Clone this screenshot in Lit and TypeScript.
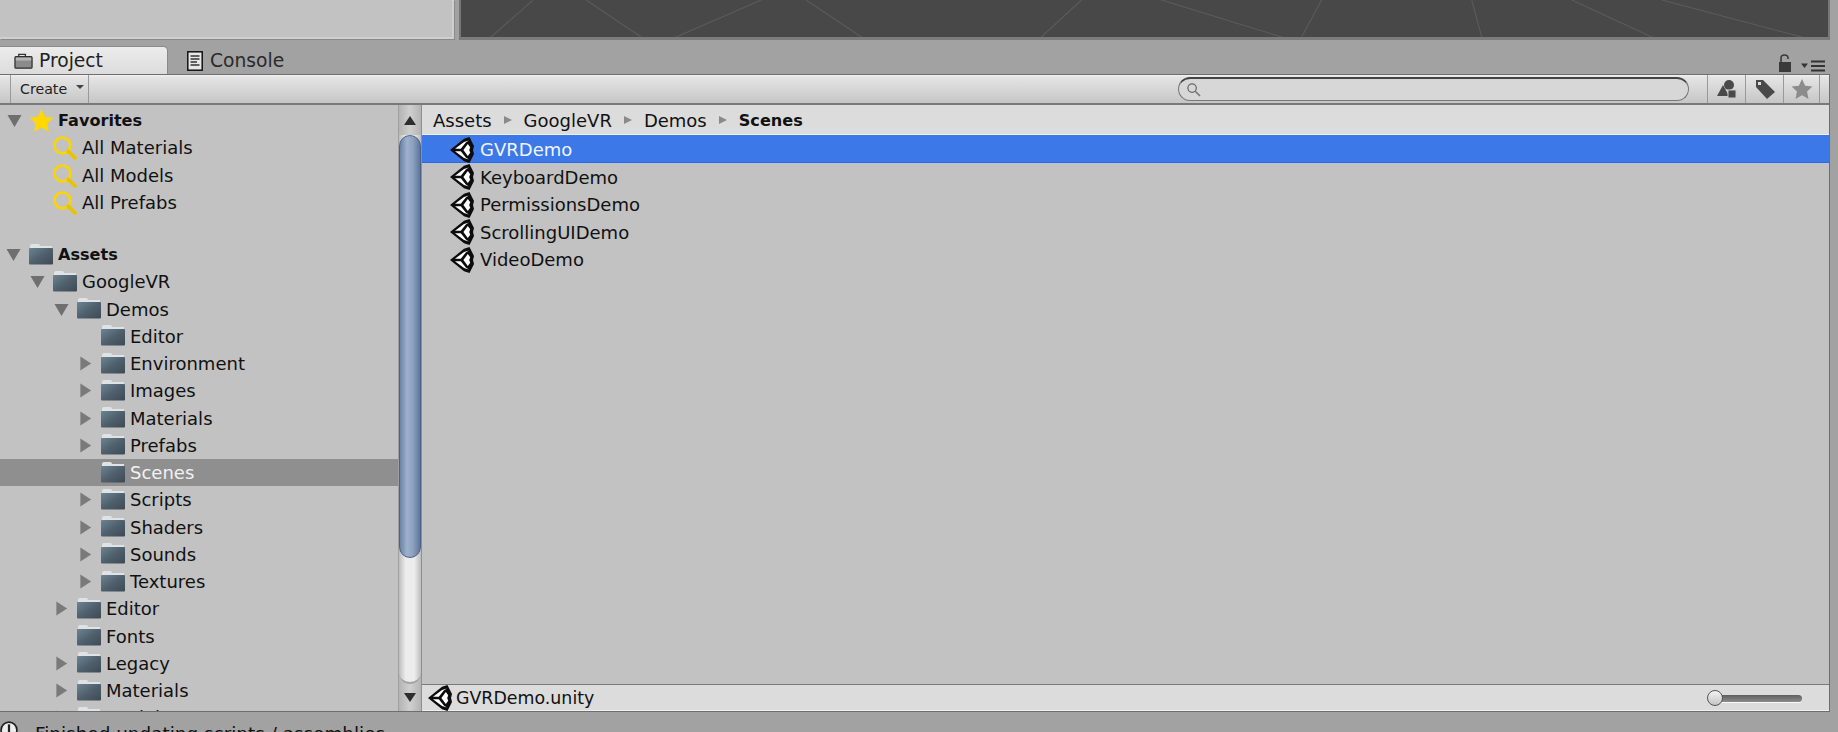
import { LitElement, html, css, svg } from "lit";
import { customElement } from "lit/decorators.js";

type Node = { name: string; depth: number; arrow?: "open" | "closed"; bold?: boolean; sel?: boolean; gap?: boolean };

const favorites = ["All Materials", "All Models", "All Prefabs"];
const tree: Node[] = [
  { name: "Assets", depth: 0, arrow: "open", bold: true, gap: true },
  { name: "GoogleVR", depth: 1, arrow: "open" },
  { name: "Demos", depth: 2, arrow: "open" },
  { name: "Editor", depth: 3 },
  { name: "Environment", depth: 3, arrow: "closed" },
  { name: "Images", depth: 3, arrow: "closed" },
  { name: "Materials", depth: 3, arrow: "closed" },
  { name: "Prefabs", depth: 3, arrow: "closed" },
  { name: "Scenes", depth: 3, sel: true },
  { name: "Scripts", depth: 3, arrow: "closed" },
  { name: "Shaders", depth: 3, arrow: "closed" },
  { name: "Sounds", depth: 3, arrow: "closed" },
  { name: "Textures", depth: 3, arrow: "closed" },
  { name: "Editor", depth: 2, arrow: "closed" },
  { name: "Fonts", depth: 2 },
  { name: "Legacy", depth: 2, arrow: "closed" },
  { name: "Materials", depth: 2, arrow: "closed" },
  { name: "Models", depth: 2, arrow: "closed" },
];
const scenes = ["GVRDemo", "KeyboardDemo", "PermissionsDemo", "ScrollingUIDemo", "VideoDemo"];

const unity = (cls = "unity") => html`<svg class=${cls} viewBox="0 0 24 26">
  <path d="M0 13 L14 1.8 L19.5 0 L24 9 L23 13 L24 17 L19.5 26 L14 24.2 Z" fill="#0c0c0c"/>
  <path d="M5 11.8 L10.8 11.8 L15.8 5.4 L18.8 3.6 L14 5 Z" fill="#fff"/>
  <path d="M5 14.2 L10.8 14.2 L15.8 20.6 L18.8 22.4 L14 21 Z" fill="#fff"/>
  <path d="M17.8 7 L20.2 10.2 L19.2 13 L20.2 15.8 L17.8 19 L13.4 13 Z" fill="#fff"/>
</svg>`;

const folder = html`<svg class="folder" viewBox="0 0 26 22">
  <defs><linearGradient id="fg" x1="0" y1="0" x2="1" y2="1">
    <stop offset="0" stop-color="#6d8494"/><stop offset="0.5" stop-color="#4f606c"/><stop offset="1" stop-color="#3d4a54"/>
  </linearGradient></defs>
  <path d="M2 6 L2 3 Q2 1 4 1 L10 1 Q12 1 12 3 L24 3 L24 6 Z" fill="#dfe3e6"/>
  <rect x="1" y="5" width="24" height="16.5" rx="1" fill="url(#fg)"/>
</svg>`;

const star = (fill: string, cls: string) => html`<svg class=${cls} viewBox="0 0 24 24">
  <path d="M12 1 L15.4 8.4 L23.4 9.3 L17.5 14.8 L19.1 22.8 L12 18.8 L4.9 22.8 L6.5 14.8 L0.6 9.3 L8.6 8.4 Z" fill=${fill}/>
</svg>`;

const lens = html`<svg class="lens" viewBox="0 0 24 24">
  <circle cx="10" cy="10" r="7.6" fill="none" stroke="#fbd500" stroke-width="2.6"/>
  <path d="M15.6 15.6 L22 22" stroke="#e8c400" stroke-width="3.6" stroke-linecap="round"/>
</svg>`;

const tri = (open: boolean) =>
  open
    ? html`<svg class="arrow" viewBox="0 0 16 16"><path d="M0.5 2 L15.5 2 L8 15 Z" fill="#6f6f6f"/></svg>`
    : html`<svg class="arrow" viewBox="0 0 16 16"><path d="M2.5 0.5 L14 8 L2.5 15.5 Z" fill="#7a7a7a"/></svg>`;

@customElement("app-root")
export class AppRoot extends LitElement {
  static styles = css`
    :host {
      display: flex;
      flex-direction: column;
      width: 1838px;
      height: 732px;
      overflow: hidden;
      background: #a2a2a2;
      font-family: "DejaVu Sans", sans-serif;
      font-size: 18px;
      color: #111;
    }
    .top { display: flex; height: 40px; flex: none; }
    .top-left {
      width: 454px; height: 39px; box-sizing: border-box; background: #c2c2c2;
      border: 2px solid #cfcfcf; border-left: none; border-top: none;
      box-shadow: 1px 1px 0 #8a8a8a;
    }
    .scene {
      margin-left: 5px; width: 1371px; height: 40px; box-sizing: border-box; background: #484848;
      border-left: 2px solid #777; border-bottom: 3px solid #7c7c7c; border-right: 2px solid #777;
    }
    .scene svg { display: block; width: 100%; height: 100%; }
    .tabs { display: flex; height: 34px; flex: none; position: relative; align-items: flex-end; }
    .tab { height: 27px; display: flex; align-items: center; font-size: 18.7px; color: #222; box-sizing: border-box; }
    .tab.active {
      width: 167px; padding-left: 14px; gap: 6px; background: linear-gradient(#ececec, #dcdcdc);
      border-radius: 0 4px 0 0; box-shadow: 0 -1px 0 #8a8a8a, 1px 0 0 #8a8a8a;
    }
    .tab.other { padding-left: 20px; gap: 7px; color: #2a2a2a; }
    .tab-icons { margin-left: auto; margin-right: 13px; display: flex; align-items: flex-end; gap: 9px; height: 27px; padding-bottom: 2px; box-sizing: border-box; }
    .panel {
      width: 1830px; flex: none; height: 638px; display: flex; flex-direction: column; box-sizing: border-box;
      border-top: 1px solid #6e6e6e; border-right: 1px solid #6e6e6e; border-bottom: 1px solid #6e6e6e;
    }
    .toolbar {
      height: 30px; flex: none; display: flex; align-items: stretch; box-sizing: border-box;
      background: linear-gradient(#f2f2f2 0, #e4e4e4 8%, #c6c6c6 100%);
      border-bottom: 2px solid #797979;
    }
    .create {
      margin-left: 10px; width: 79px; display: flex; align-items: center; padding-left: 9px; gap: 9px; box-sizing: border-box;
      border-left: 1px solid #9a9a9a; border-right: 1px solid #9a9a9a; font-size: 14.2px; color: #222;
    }
    .caret { width: 0; height: 0; border-left: 4px solid transparent; border-right: 4px solid transparent; border-top: 4px solid #444; margin-top: -4px; }
    .search {
      margin-left: auto; width: 511px; height: 24px; margin-top: 2px; box-sizing: border-box; border-radius: 12px;
      background: #d7d7d7; border: 1px solid #777; border-top: 2px solid #444; display: flex; align-items: center; padding-left: 7px;
    }
    .search svg { width: 15px; height: 15px; }
    .tool-btns { display: flex; margin-left: 18px; margin-right: 9px; }
    .tool-btn { width: 38px; border-left: 1px solid #999; display: flex; align-items: center; justify-content: center; box-sizing: border-box; }
    .tool-btn:last-child { width: 37px; border-right: 1px solid #999; }
    .tool-btn svg { width: 22px; height: 22px; }
    .split { flex: 1; display: flex; min-height: 0; }
    .tree { width: 398px; flex: none; background: #c2c2c2; overflow: hidden; padding-top: 2px; box-sizing: border-box; }
    .row { height: 27.25px; display: flex; align-items: center; box-sizing: border-box; white-space: nowrap; }
    .row.sel { background: #8f8f8f; color: #f2f2f2; }
    .row.gap { margin-top: 25px; }
    .b { font-weight: 700; font-size: 16.1px; }
    .arrow { width: 15px; height: 15px; flex: none; }
    .slot { width: 22px; flex: none; display: flex; align-items: center; }
    .folder { width: 26px; height: 22px; flex: none; margin-right: 4px; margin-top: -2px; }
    .star { width: 25px; height: 25px; flex: none; margin-right: 4px; }
    .lens { width: 25px; height: 25px; flex: none; margin-right: 5px; }
    .scroll {
      width: 24px; flex: none; display: flex; flex-direction: column; align-items: center; box-sizing: border-box;
      background: linear-gradient(90deg, #b4b4b4, #cfcfcf 50%, #b4b4b4); border-left: 1px solid #a0a0a0; border-right: 1px solid #8f8f8f;
    }
    .sb-btn { height: 27px; flex: none; width: 100%; display: flex; align-items: center; justify-content: center; }
    .sb-btn.first { height: 30px; }
    .up { width: 0; height: 0; border-left: 6px solid transparent; border-right: 6px solid transparent; border-bottom: 9px solid #2e2e2e; }
    .down { width: 0; height: 0; border-left: 6px solid transparent; border-right: 6px solid transparent; border-top: 9px solid #2e2e2e; }
    .track { flex: 1; width: 22px; display: flex; flex-direction: column; background: linear-gradient(90deg, #bdbdbd, #ececec 30%, #ececec 70%, #bdbdbd); border-radius: 0 0 11px 11px; border-bottom: 2px solid #a4a4a4; box-sizing: border-box; }
    .thumb {
      height: 423px; flex: none; width: 100%; box-sizing: border-box; border-radius: 11px;
      background: linear-gradient(90deg, #6a82a6, #9db1cc 35%, #8ca1bf 65%, #5f7699);
      border: 1.5px solid #4c6388;
    }
    .content { flex: 1; min-width: 0; display: flex; flex-direction: column; background: #c2c2c2; }
    .crumbs {
      height: 30px; flex: none; background: #dcdcdc; display: flex; align-items: center; padding-left: 11px; padding-top: 1px; box-sizing: border-box;
      border-bottom: 1px solid #f0f0f0;
    }
    .crumb-sep { width: 0; height: 0; border-left: 8px solid #8a8a8a; border-top: 4px solid transparent; border-bottom: 4px solid transparent; margin: 0 12px; }
    .list { flex: 1; }
    .item { height: 27.45px; display: flex; align-items: center; padding-left: 28px; padding-top: 2px; gap: 6px; box-sizing: border-box; }
    .item.sel { height: 28px; background: #3c78e8; color: #f0f6ff; border-bottom: 1px solid #1f6cf0; margin-bottom: -0.4px; }
    .unity { width: 24px; height: 26px; flex: none; }
    .footer {
      height: 27px; flex: none; background: #dcdcdc; border-top: 1px solid #7a7a7a; display: flex; align-items: center; padding-left: 6px; gap: 4px;
      box-sizing: border-box; box-shadow: inset 0 -1px 0 #f0f0f0; font-size: 17.4px;
    }
    .slider { margin-left: auto; margin-right: 27px; display: flex; align-items: center; width: 95px; position: relative; height: 100%; }
    .rail { position: absolute; left: 8px; right: 0; height: 7px; border-radius: 4px; background: linear-gradient(#5f5f5f, #8c8c8c); box-shadow: 0 1px 0 #fafafa; }
    .knob { position: absolute; left: 0; width: 16px; height: 16px; box-sizing: border-box; border-radius: 50%; background: linear-gradient(#f4f4f4, #c4c4c4); border: 1.5px solid #555; }
    .status { display: flex; align-items: flex-start; gap: 17px; padding-top: 11px; font-size: 18.4px; white-space: nowrap; color: #111; flex: none; }
    .alert { width: 18px; height: 18px; flex: none; margin-top: -2px; }
  `;

  render() {
    return html`
      <div class="top">
        <div class="top-left"></div>
        <div class="scene">
          <svg viewBox="0 0 1366 36" preserveAspectRatio="none">
            ${[[30, 36, 72, 0], [180, 36, 125, 0], [215, 36, 300, 0], [400, 36, 345, 0], [580, 36, 620, 0], [820, 36, 700, 0], [840, 36, 860, 0], [1020, 36, 1010, 0], [1190, 36, 1110, 0], [1340, 36, 1200, 0]].map(
              ([a, b, c, d]) => svg`<line x1=${a} y1=${b} x2=${c} y2=${d} stroke="#5c5c5c" stroke-width="1"/>`
            )}
          </svg>
        </div>
      </div>
      <div class="tabs">
        <div class="tab active">
          <svg width="19" height="18" viewBox="0 0 20 18">
            <path d="M5 4 V2 H12 V4" fill="none" stroke="#333" stroke-width="1.4"/>
            <rect x="1" y="4.5" width="18" height="12" rx="1" fill="#8b8b8b" stroke="#2e2e2e" stroke-width="1.3"/>
            <rect x="2" y="5.5" width="16" height="3" fill="#b6b6b6"/>
          </svg>
          Project
        </div>
        <div class="tab other">
          <svg width="16" height="20" viewBox="0 0 16 20">
            <rect x="0.8" y="0.8" width="14.4" height="18.4" fill="#e8e8e8" stroke="#111" stroke-width="1.5"/>
            <path d="M3.5 5 H12.5 M3.5 8 H12.5 M3.5 11 H10 M3.5 14 H12.5" stroke="#333" stroke-width="1.3"/>
          </svg>
          Console
        </div>
        <div class="tab-icons">
          <svg width="14" height="18" viewBox="0 0 14 18">
            <path d="M3 8 V4 Q3 1 6.5 1 Q10 1 10 4 V5" fill="none" stroke="#3a3a3a" stroke-width="1.6"/>
            <rect x="1" y="8" width="12" height="10" fill="#3a3a3a"/>
          </svg>
          <svg width="24" height="12" viewBox="0 0 24 12">
            <path d="M0 3.5 H7 L3.5 8 Z" fill="#333"/>
            <path d="M10 1.5 H24 M10 6 H24 M10 10.5 H24" stroke="#333" stroke-width="2"/>
          </svg>
        </div>
      </div>
      <div class="panel">
        <div class="toolbar">
          <div class="create">Create <span class="caret"></span></div>
          <div class="search">
            <svg viewBox="0 0 16 16"><circle cx="6.5" cy="6.5" r="4.5" fill="none" stroke="#666" stroke-width="1.3"/><path d="M10 10 L15 15" stroke="#777" stroke-width="1.6"/></svg>
          </div>
          <div class="tool-btns">
            <div class="tool-btn">
              <svg viewBox="0 0 22 22">
                <circle cx="13" cy="7" r="5" fill="#4a4a4a"/>
                <path d="M7 7 L13 18 L1 18 Z" fill="#4a4a4a"/>
                <rect x="12" y="12" width="8" height="8" fill="#4a4a4a" stroke="#c8c8c8" stroke-width="1"/>
              </svg>
            </div>
            <div class="tool-btn">
              <svg viewBox="0 0 22 22">
                <path d="M2 2 H9 L21 14 L13 21 L2 9 Z" fill="#4a4a4a"/>
                <rect x="4" y="4" width="3" height="3" fill="#ddd"/>
              </svg>
            </div>
            <div class="tool-btn">${star("#8c8c8c", "")}</div>
          </div>
        </div>
        <div class="split">
          <div class="tree">
            <div class="row b" style="padding-left: 7px">
              <span class="slot">${tri(true)}</span>${star("#ffd800", "star")}Favorites
            </div>
            ${favorites.map(
              (f) => html`<div class="row" style="padding-left: 52px">${lens}${f}</div>`
            )}
            ${tree.map(
              (n) => html`<div class="row ${n.sel ? "sel" : ""} ${n.gap ? "gap" : ""} ${n.bold ? "b" : ""}" style="padding-left: ${6 + n.depth * 24}px">
                <span class="slot">${n.arrow ? tri(n.arrow === "open") : ""}</span>${folder}${n.name}
              </div>`
            )}
          </div>
          <div class="scroll">
            <div class="sb-btn first"><span class="up"></span></div>
            <div class="track"><div class="thumb"></div></div>
            <div class="sb-btn"><span class="down"></span></div>
          </div>
          <div class="content">
            <div class="crumbs">
              <span>Assets</span><span class="crumb-sep"></span>
              <span>GoogleVR</span><span class="crumb-sep"></span>
              <span>Demos</span><span class="crumb-sep"></span>
              <span class="b">Scenes</span>
            </div>
            <div class="list">
              ${scenes.map(
                (s, i) => html`<div class="item ${i === 0 ? "sel" : ""}">${unity()}${s}</div>`
              )}
            </div>
            <div class="footer">
              ${unity()}GVRDemo.unity
              <div class="slider"><div class="rail"></div><div class="knob"></div></div>
            </div>
          </div>
        </div>
      </div>
      <div class="status">
        <svg class="alert" viewBox="0 0 16 16"><circle cx="8" cy="8" r="7" fill="#eee" stroke="#222" stroke-width="1.5"/><rect x="7" y="3" width="2" height="7" fill="#222"/></svg>
        Finished updating scripts / assemblies
      </div>
    `;
  }
}
